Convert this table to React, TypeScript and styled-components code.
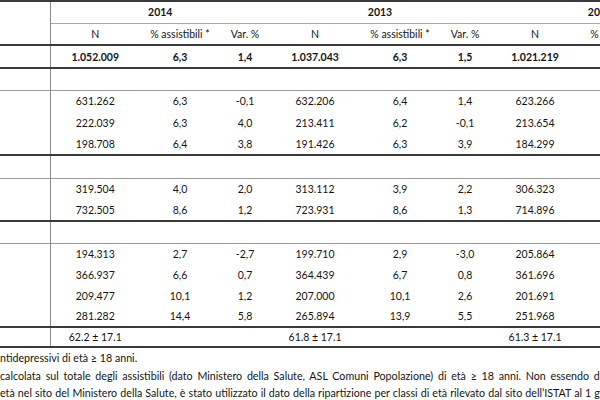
import React from "react";
import styled, { createGlobalStyle } from "styled-components";

const Global = createGlobalStyle`
  html, body { margin: 0; padding: 0; background: #fff; }
`;

const Page = styled.div`
  width: 600px;
  height: 400px;
  overflow: hidden;
  background: #fff;
  color: #141414;
  font-family: Lato, "Liberation Sans", sans-serif;
`;

const Table = styled.table`
  border-collapse: collapse;
  table-layout: fixed;
  width: 710px;
  font-size: 10.5px;
`;

type Rule = "dark" | "light" | "none";
const ruleCss = (r: Rule | undefined) =>
  r === "dark" ? "2px solid #3a3a3a" : r === "light" ? "1px solid #9a9a9a" : "none";

const Row = styled.tr<{ $h: number; $top?: Rule; $bottom?: Rule; $bold?: boolean }>`
  height: ${(p) => p.$h}px;
  border-top: ${(p) => ruleCss(p.$top)};
  border-bottom: ${(p) => ruleCss(p.$bottom)};
  font-weight: ${(p) => (p.$bold ? 700 : 400)};
`;

const Cell = styled.td`
  padding: 0;
  text-align: center;
  vertical-align: middle;
  white-space: nowrap;
  line-height: 12px;
`;

const LabelCell = styled.td`
  padding: 0;
  border-right: 1px solid #8a8a8a;
`;

const YearCell = styled.td`
  padding: 0;
  text-align: center;
  font-weight: 700;
  border-bottom: 1px solid #a8a8a8;
`;

const Notes = styled.div`
  padding-top: 1px;
  font-size: 10.7px;
`;

const NoteLine = styled.div<{ $ws?: number }>`
  white-space: nowrap;
  line-height: 17.5px;
  word-spacing: ${(p) => p.$ws ?? 0}px;
`;

const years = ["2014", "2013", "2012"];
const heads = ["N", "% assistibili *", "Var. %"];

type Data = { h: number; v: string[] };

const sec1: Data[] = [
  { h: 22, v: ["631.262", "6,3", "-0,1", "632.206", "6,4", "1,4", "623.266", "", ""] },
  { h: 21, v: ["222.039", "6,3", "4,0", "213.411", "6,2", "-0,1", "213.654", "", ""] },
  { h: 22, v: ["198.708", "6,4", "3,8", "191.426", "6,3", "3,9", "184.299", "", ""] },
];
const sec2: Data[] = [
  { h: 21, v: ["319.504", "4,0", "2,0", "313.112", "3,9", "2,2", "306.323", "", ""] },
  { h: 22, v: ["732.505", "8,6", "1,2", "723.931", "8,6", "1,3", "714.896", "", ""] },
];
const sec3: Data[] = [
  { h: 21, v: ["194.313", "2,7", "-2,7", "199.710", "2,9", "-3,0", "205.864", "", ""] },
  { h: 21, v: ["366.937", "6,6", "0,7", "364.439", "6,7", "0,8", "361.696", "", ""] },
  { h: 21, v: ["209.477", "10,1", "1,2", "207.000", "10,1", "2,6", "201.691", "", ""] },
  { h: 21, v: ["281.282", "14,4", "5,8", "265.894", "13,9", "5,5", "251.968", "", ""] },
];

const DataRows = ({ rows }: { rows: Data[] }) => (
  <>
    {rows.map((r, i) => (
      <Row key={i} $h={r.h}>
        <LabelCell />
        {r.v.map((c, j) => (
          <Cell key={j}>{c}</Cell>
        ))}
      </Row>
    ))}
  </>
);

const SectionRow = ({ h }: { h: number }) => (
  <Row $h={h} $top="dark" $bottom="light">
    <LabelCell />
    <Cell colSpan={9} />
  </Row>
);

const means = ["62.2 ± 17.1", "61.8 ± 17.1", "61.3 ± 17.1"];

export default function App() {
  return (
    <Page>
      <Global />
      <Table>
        <colgroup>
          <col style={{ width: 50 }} />
          {years.map((y) => (
            <React.Fragment key={y}>
              <col style={{ width: 90 }} />
              <col style={{ width: 80 }} />
              <col style={{ width: 50 }} />
            </React.Fragment>
          ))}
        </colgroup>
        <tbody>
          <Row $h={22} $top="dark">
            <LabelCell rowSpan={2} />
            {years.map((y) => (
              <YearCell key={y} colSpan={3}>
                {y}
              </YearCell>
            ))}
          </Row>
          <Row $h={22}>
            {years.map((y) =>
              heads.map((h) => <Cell key={y + h}>{h}</Cell>)
            )}
          </Row>
          <Row $h={23} $top="dark" $bold>
            <LabelCell />
            {["1.052.009", "6,3", "1,4", "1.037.043", "6,3", "1,5", "1.021.219", "", ""].map((c, i) => (
              <Cell key={i}>{c}</Cell>
            ))}
          </Row>
          <SectionRow h={22} />
          <DataRows rows={sec1} />
          <SectionRow h={23} />
          <DataRows rows={sec2} />
          <SectionRow h={22} />
          <DataRows rows={sec3} />
          <Row $h={20} $top="dark" $bottom="dark">
            <LabelCell />
            {means.map((m) => (
              <React.Fragment key={m}>
                <Cell>{m}</Cell>
                <Cell />
                <Cell />
              </React.Fragment>
            ))}
          </Row>
        </tbody>
      </Table>
      <Notes>
        <NoteLine>ntidepressivi di età ≥ 18 anni.</NoteLine>
        <NoteLine $ws={2}>
          calcolata sul totale degli assistibili (dato Ministero della Salute, ASL Comuni Popolazione) di età ≥ 18 anni. Non essendo disponibile
        </NoteLine>
        <NoteLine $ws={0.35}>
          età nel sito del Ministero della Salute, è stato utilizzato il dato della ripartizione per classi di età rilevato dal sito dell’ISTAT al 1 gennaio
        </NoteLine>
      </Notes>
    </Page>
  );
}
